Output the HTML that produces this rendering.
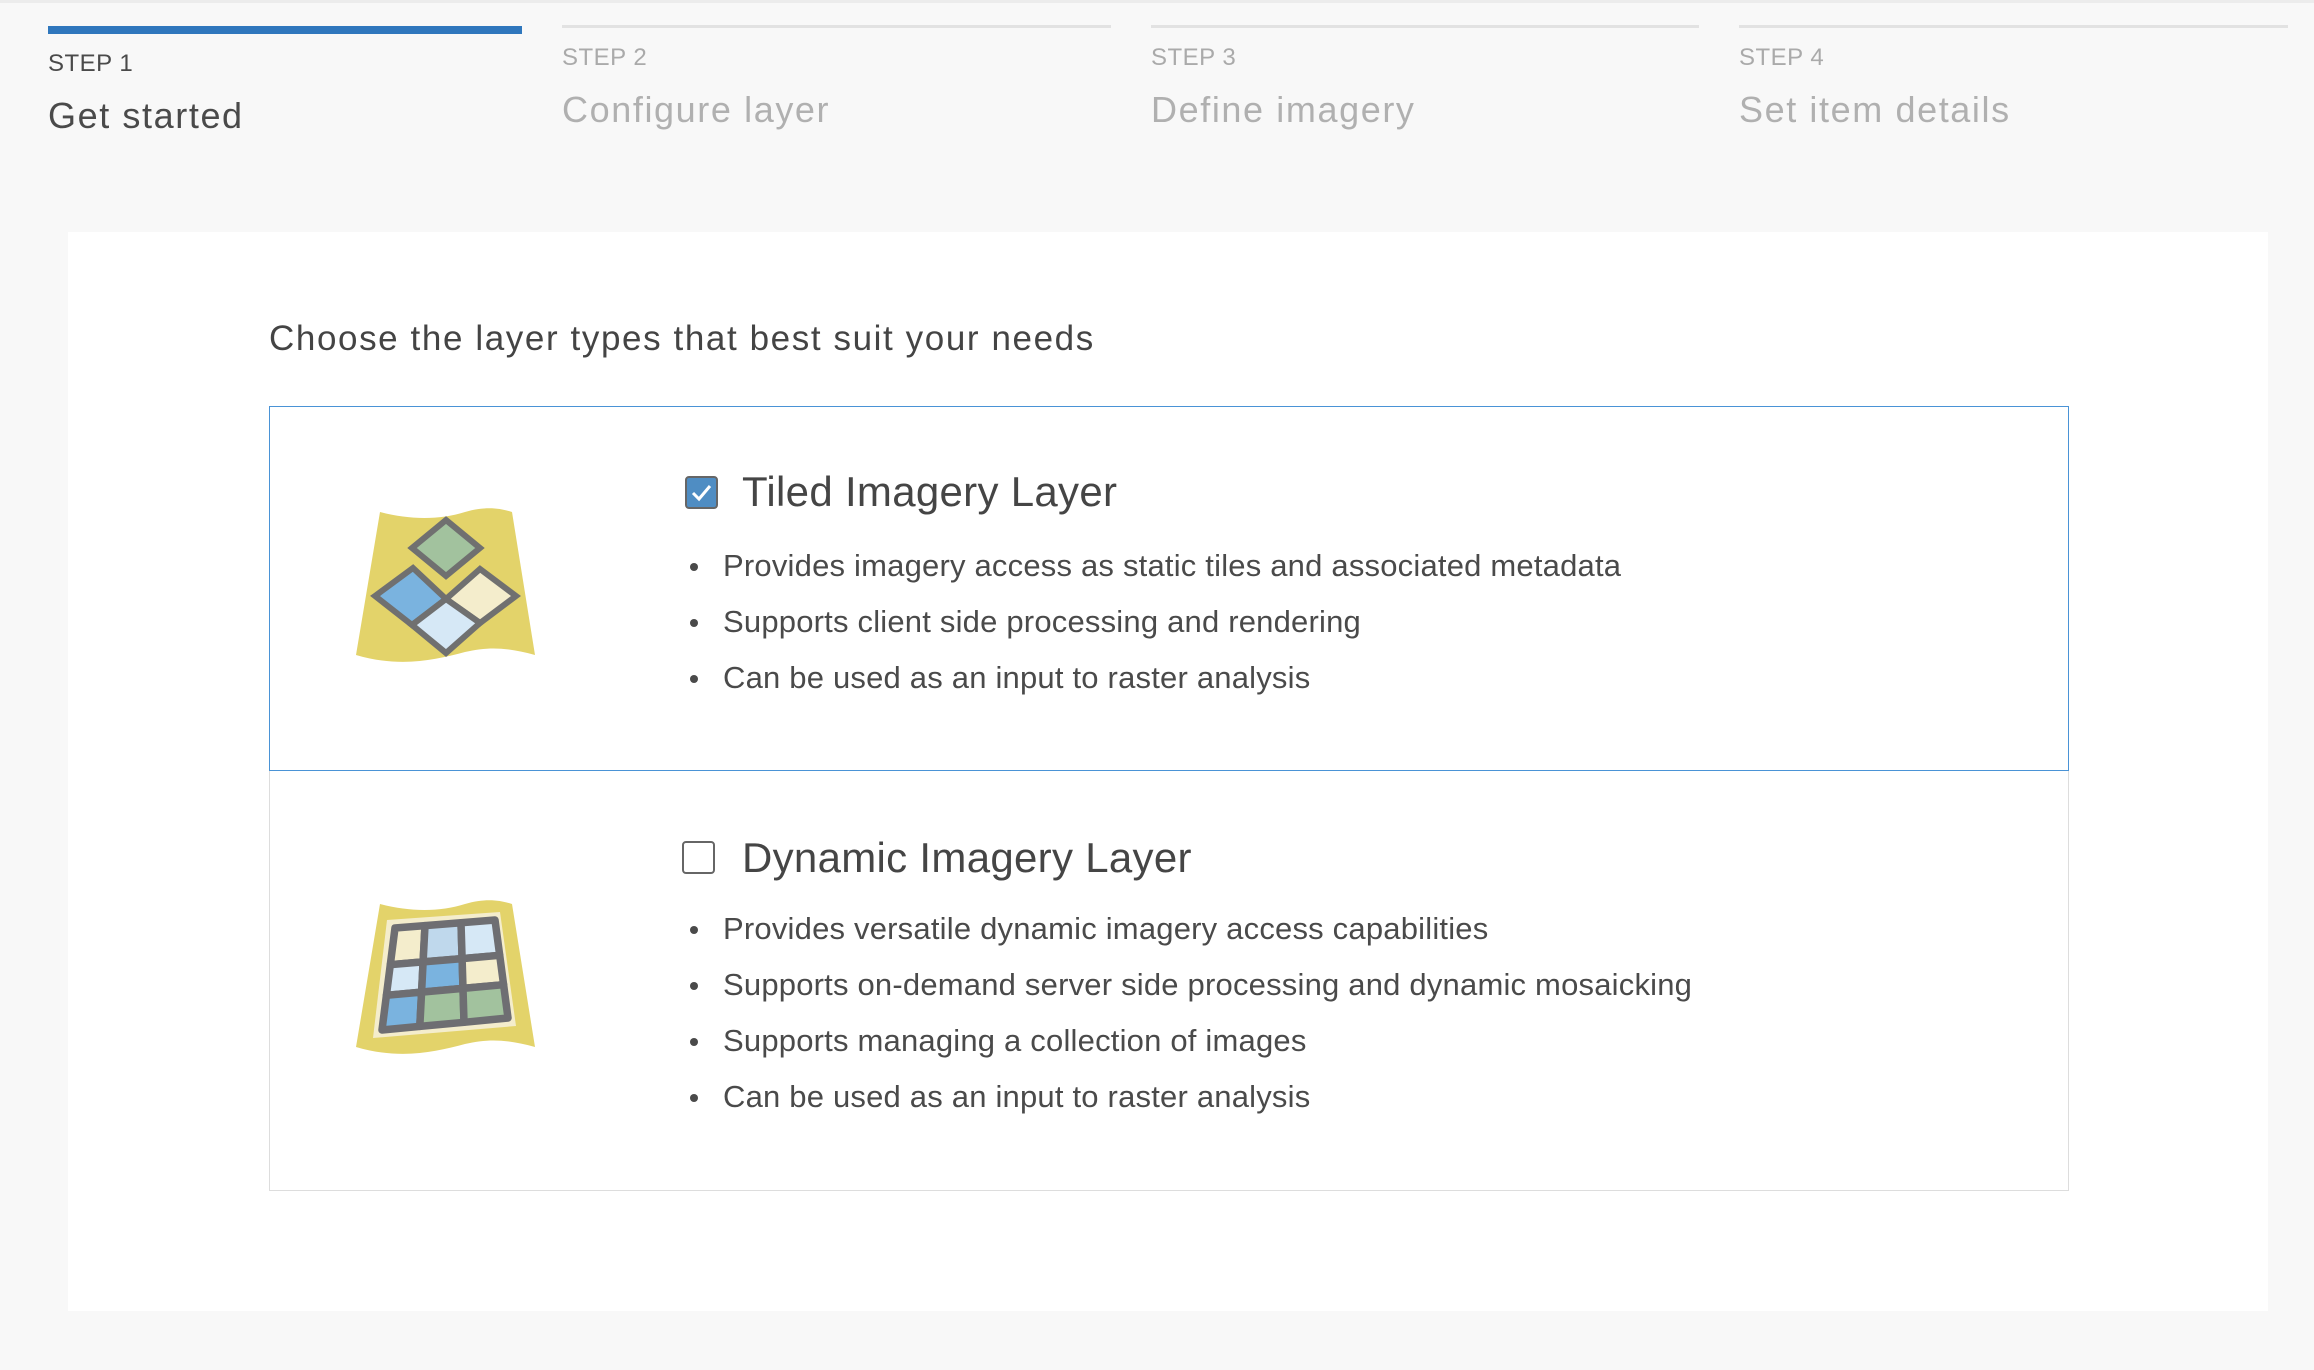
<!DOCTYPE html>
<html><head><meta charset="utf-8"><style>
*{margin:0;padding:0;box-sizing:border-box}
body{width:2314px;height:1370px;background:#f8f8f8;font-family:"Liberation Sans",sans-serif;color:#4a4a4a;position:relative;overflow:hidden}
.topline{position:absolute;left:0;top:0;width:2314px;height:3px;background:#ececec}
.bar{position:absolute;height:3px;background:#e2e2e2;top:25px}
.bar.on{background:#2f77bd;height:8px;top:26px}
.sl{position:absolute;font-size:24px;color:#aaa;letter-spacing:.5px}
.st{position:absolute;font-size:36px;color:#b0b0b0;letter-spacing:1.6px}
.panel{position:absolute;left:68px;top:232px;width:2200px;height:1079px;background:#fff}
.h{position:absolute;left:269px;top:319px;font-size:35px;color:#444;letter-spacing:1.6px}
.card{position:absolute;left:269px;width:1800px;border:1.5px solid #ddd}
.cb{position:absolute;width:33px;height:33px;border-radius:4px}
.title{position:absolute;font-size:42px;color:#454545;letter-spacing:.3px}
ul{position:absolute;left:690px;list-style:none}
li{font-size:31px;height:56px;line-height:56px;position:relative;padding-left:33px;letter-spacing:.2px}
li:before{content:"";position:absolute;left:0;top:25px;width:8px;height:8px;border-radius:50%;background:#4a4a4a}
</style></head><body>
<div class="topline"></div>
<div class="bar on" style="left:48px;width:474px"></div>
<div class="bar" style="left:562px;width:549px"></div>
<div class="bar" style="left:1151px;width:548px"></div>
<div class="bar" style="left:1739px;width:549px"></div>
<div class="sl" style="left:48px;top:50px;color:#4a4a4a">STEP 1</div>
<div class="st" style="left:48px;top:95px;color:#4a4a4a">Get started</div>
<div class="sl" style="left:562px;top:44px">STEP 2</div>
<div class="st" style="left:562px;top:89px">Configure layer</div>
<div class="sl" style="left:1151px;top:44px">STEP 3</div>
<div class="st" style="left:1151px;top:89px">Define imagery</div>
<div class="sl" style="left:1739px;top:44px">STEP 4</div>
<div class="st" style="left:1739px;top:89px">Set item details</div>

<div class="panel"></div>
<div class="h">Choose the layer types that best suit your needs</div>

<div class="card" style="top:770px;height:421px"></div>
<div class="card" style="top:406px;height:365px;border-color:#4a93d6"></div>

<svg style="position:absolute;left:340px;top:480px" width="220" height="200" viewBox="0 0 220 200">
<path d="M40 32 C70 40 100 40 125 32 C145 26 160 28 172 32 L195 175 C170 168 150 166 125 172 C95 180 60 188 16 175 Z" fill="#e3d36a"/>
<g stroke="#707070" stroke-width="6" stroke-linejoin="miter">
<polygon points="106,40 140,68 106,96 72,68" fill="#a2c29e"/>
<polygon points="35,116 73,88 106,119 72,145" fill="#7ab3df"/>
<polygon points="106,119 140,89 176,116 140,143" fill="#f4edcc"/>
<polygon points="106,119 140,143 106,173 72,145" fill="#d6e8f6"/>
</g></svg>

<svg style="position:absolute;left:340px;top:880px" width="220" height="190" viewBox="0 0 220 190">
<path d="M40 24 C70 32 100 32 125 24 C145 18 160 20 172 24 L195 167 C170 160 150 158 125 164 C95 172 60 180 16 167 Z" fill="#e3d36a"/>
<polygon points="47,40 160,32 176,146 33,158" fill="#f4edcc"/>
<g stroke="#6e6e72" stroke-width="7.5" stroke-linejoin="round">
<polygon points="55,48 85,45.6 83.1,81.9 50.3,84.7" fill="#f4edcc"/>
<polygon points="85,45.6 121,42.7 122.1,78.6 83.1,81.9" fill="#bfd8ec"/>
<polygon points="121,42.7 155,40 159.7,75.3 122.1,78.6" fill="#d6e8f6"/>
<polygon points="50.3,84.7 83.1,81.9 81.6,112.1 46.4,115.3" fill="#d6e8f6"/>
<polygon points="83.1,81.9 122.1,78.6 123,108.4 81.6,112.1" fill="#7ab3df"/>
<polygon points="122.1,78.6 159.7,75.3 163.6,104.7 123,108.4" fill="#f4edcc"/>
<polygon points="46.4,115.3 81.6,112.1 79.8,146.4 42,150" fill="#7ab3df"/>
<polygon points="81.6,112.1 123,108.4 124,142.3 79.8,146.4" fill="#a2c29e"/>
<polygon points="123,108.4 163.6,104.7 168,138 124,142.3" fill="#a2c29e"/>
</g></svg>

<div class="cb" style="left:685px;top:476px;background:#4f8dc3;border:2px solid #666">
<svg width="29" height="29" viewBox="0 0 29 29"><path d="M6 15 L12 21 L23 8" stroke="#fff" stroke-width="3" fill="none"/></svg></div>
<div class="title" style="left:742px;top:468px">Tiled Imagery Layer</div>
<ul style="top:538px">
<li>Provides imagery access as static tiles and associated metadata</li>
<li>Supports client side processing and rendering</li>
<li>Can be used as an input to raster analysis</li>
</ul>

<div class="cb" style="left:682px;top:841px;background:#fff;border:2px solid #666"></div>
<div class="title" style="left:742px;top:834px">Dynamic Imagery Layer</div>
<ul style="top:901px">
<li>Provides versatile dynamic imagery access capabilities</li>
<li>Supports on-demand server side processing and dynamic mosaicking</li>
<li>Supports managing a collection of images</li>
<li>Can be used as an input to raster analysis</li>
</ul>
</body></html>
